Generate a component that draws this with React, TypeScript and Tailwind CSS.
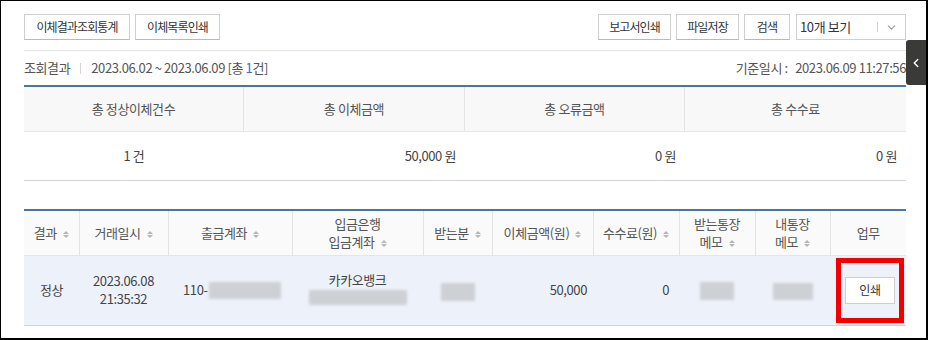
import { ChevronDown, ChevronLeft } from "lucide-react";

const font = "font-['Noto_Sans_CJK_KR',sans-serif]";

function Btn({ label, className = "" }: { label: string; className?: string }) {
  return (
    <button
      className={`h-[26px] whitespace-nowrap border border-[#cfcfcf] border-b-[#b9b9b9] bg-white px-0 text-[12px] tracking-[-0.9px] text-[#333] ${className}`}
    >
      {label}
    </button>
  );
}

function Sort() {
  return (
    <span className="ml-[6px] inline-flex flex-col items-center justify-center gap-[1px] align-middle">
      <span className="h-0 w-0 border-x-[3px] border-b-[3px] border-x-transparent border-b-[#b5b5b5]" />
      <span className="h-0 w-0 border-x-[3px] border-t-[3px] border-x-transparent border-t-[#b5b5b5]" />
    </span>
  );
}

function Blur({ w, h, className = "" }: { w: string; h: string; className?: string }) {
  return (
    <span className={`inline-block ${w} ${h} bg-[#cdd0d5] blur-[1.5px] ${className}`} />
  );
}

const summary = [
  { title: "총 정상이체건수", value: "1 건", center: true },
  { title: "총 이체금액", value: "50,000 원" },
  { title: "총 오류금액", value: "0 원" },
  { title: "총 수수료", value: "0 원" },
];

export default function App() {
  return (
    <div
      className={`relative h-[340px] w-[928px] overflow-hidden border-l border-t border-b-2 border-r-2 border-black bg-white ${font} text-[13px] tracking-[-0.4px] text-[#444]`}
    >
      {/* side tab */}
      <div className="absolute right-0 top-[39px] flex h-[45px] w-[20px] items-center justify-center rounded-l-[3px] bg-[#3a3a38]">
        <ChevronLeft size={14} strokeWidth={2.5} className="text-white" />
      </div>

      <div className="ml-[23px] w-[882px] pt-[13px]">
        {/* toolbar */}
        <div className="flex items-center">
          <div className="flex gap-[5px]">
            <Btn label="이체결과조회통계" className="w-[106px]" />
            <Btn label="이체목록인쇄" className="w-[85px]" />
          </div>
          <div className="ml-auto flex gap-[5px]">
            <Btn label="보고서인쇄" className="w-[73px]" />
            <Btn label="파일저장" className="w-[63px]" />
            <Btn label="검색" className="w-[46px]" />
            <div className="ml-[1px] flex h-[26px] w-[110px] items-center border border-[#cfcfcf] bg-white pl-[3px] text-[13px] text-[#333]">
              <span className="whitespace-nowrap">10개 보기</span>
              <span className="ml-auto h-[10px] border-l border-[#cfcfcf]" />
              <ChevronDown size={13} className="mx-[7px] text-[#999]" />
            </div>
          </div>
        </div>

        <div className="mt-[10px] border-t border-[#e3e3e3]" />

        {/* info */}
        <div className="flex h-[34px] items-center text-[#555]">
          <span>조회결과</span>
          <span className="mx-[10px] h-[11px] border-l border-[#d5d5d5]" />
          <span>2023.06.02 ~ 2023.06.09 [총 <span className="text-[#3a6fc4]">1</span>건]</span>
          <span className="ml-auto whitespace-pre">기준일시 :   2023.06.09 11:27:56</span>
        </div>

        {/* summary */}
        <div className="border-t-2 border-[#4a77a0]">
          <div className="grid grid-cols-[220px_221px_220px_221px] border-b border-[#e5e5e5] bg-[#f8f8f8]">
            {summary.map((s, i) => (
              <div
                key={s.title}
                className={`flex h-[44px] items-center justify-center text-[#555] ${i < 3 ? "border-r border-[#e3e3e3]" : ""}`}
              >
                {s.title}
              </div>
            ))}
          </div>
          <div className="grid grid-cols-[220px_221px_220px_221px] border-b border-[#d5d5d5]">
            {summary.map((s) => (
              <div
                key={s.title}
                className={`flex h-[48px] items-center text-[#444] ${s.center ? "justify-center" : "justify-end pr-[9px]"}`}
              >
                {s.value}
              </div>
            ))}
          </div>
        </div>

        {/* list */}
        <table className="mt-[28px] w-[882px] table-fixed border-collapse border-t-2 border-[#4a77a0]">
          <colgroup>
            <col className="w-[55px]" />
            <col className="w-[89px]" />
            <col className="w-[124px]" />
            <col className="w-[131px]" />
            <col className="w-[69px]" />
            <col className="w-[101px]" />
            <col className="w-[86px]" />
            <col className="w-[76px]" />
            <col className="w-[75px]" />
            <col className="w-[76px]" />
          </colgroup>
          <thead>
            <tr className="h-[45px] border-b border-[#e5e5e5] bg-[#fafafa] text-[#555]">
              <th className="border-r border-[#e3e3e3] font-normal">결과<Sort /></th>
              <th className="border-r border-[#e3e3e3] font-normal">거래일시<Sort /></th>
              <th className="border-r border-[#e3e3e3] font-normal">출금계좌<Sort /></th>
              <th className="border-r border-[#e3e3e3] font-normal leading-[18px]">
                <div>입금은행</div>
                <div>입금계좌<Sort /></div>
              </th>
              <th className="border-r border-[#e3e3e3] font-normal">받는분<Sort /></th>
              <th className="border-r border-[#e3e3e3] font-normal">이체금액(원)<Sort /></th>
              <th className="border-r border-[#e3e3e3] font-normal">수수료(원)<Sort /></th>
              <th className="border-r border-[#e3e3e3] font-normal leading-[18px]">
                <div>받는통장</div>
                <div>메모<Sort /></div>
              </th>
              <th className="border-r border-[#e3e3e3] font-normal leading-[18px]">
                <div>내통장</div>
                <div>메모<Sort /></div>
              </th>
              <th className="font-normal">업무</th>
            </tr>
          </thead>
          <tbody>
            <tr className="h-[70px] border-b border-[#d5d5d5] bg-[#edf2fa] text-[#444]">
              <td className="text-center">정상</td>
              <td className="text-center leading-[18px]">
                <div>2023.06.08</div>
                <div>21:35:32</div>
              </td>
              <td className="pl-[15px]">
                <span className="inline-flex items-center">
                  110-
                  <Blur w="w-[72px]" h="h-[17px]" className="ml-[1px]" />
                </span>
              </td>
              <td className="text-center leading-[16px]">
                <div>카카오뱅크</div>
                <Blur w="w-[98px]" h="h-[15px]" className="mt-[2px]" />
              </td>
              <td className="text-center">
                <Blur w="w-[34px]" h="h-[18px]" className="mt-[2px] align-middle" />
              </td>
              <td className="pr-[6px] text-right">50,000</td>
              <td className="pr-[10px] text-right">0</td>
              <td className="text-center">
                <Blur w="w-[34px]" h="h-[18px]" className="align-middle" />
              </td>
              <td className="text-center">
                <Blur w="w-[40px]" h="h-[17px]" className="align-middle" />
              </td>
              <td>
                <div className="ml-[6px] flex h-[65px] w-[68px] items-center justify-center border-[5px] border-[#f20000]">
                  <button className="h-[27px] w-[50px] border border-[#cfcfcf] bg-white text-[12px] text-[#333]">
                    인쇄
                  </button>
                </div>
              </td>
            </tr>
          </tbody>
        </table>
      </div>
    </div>
  );
}
